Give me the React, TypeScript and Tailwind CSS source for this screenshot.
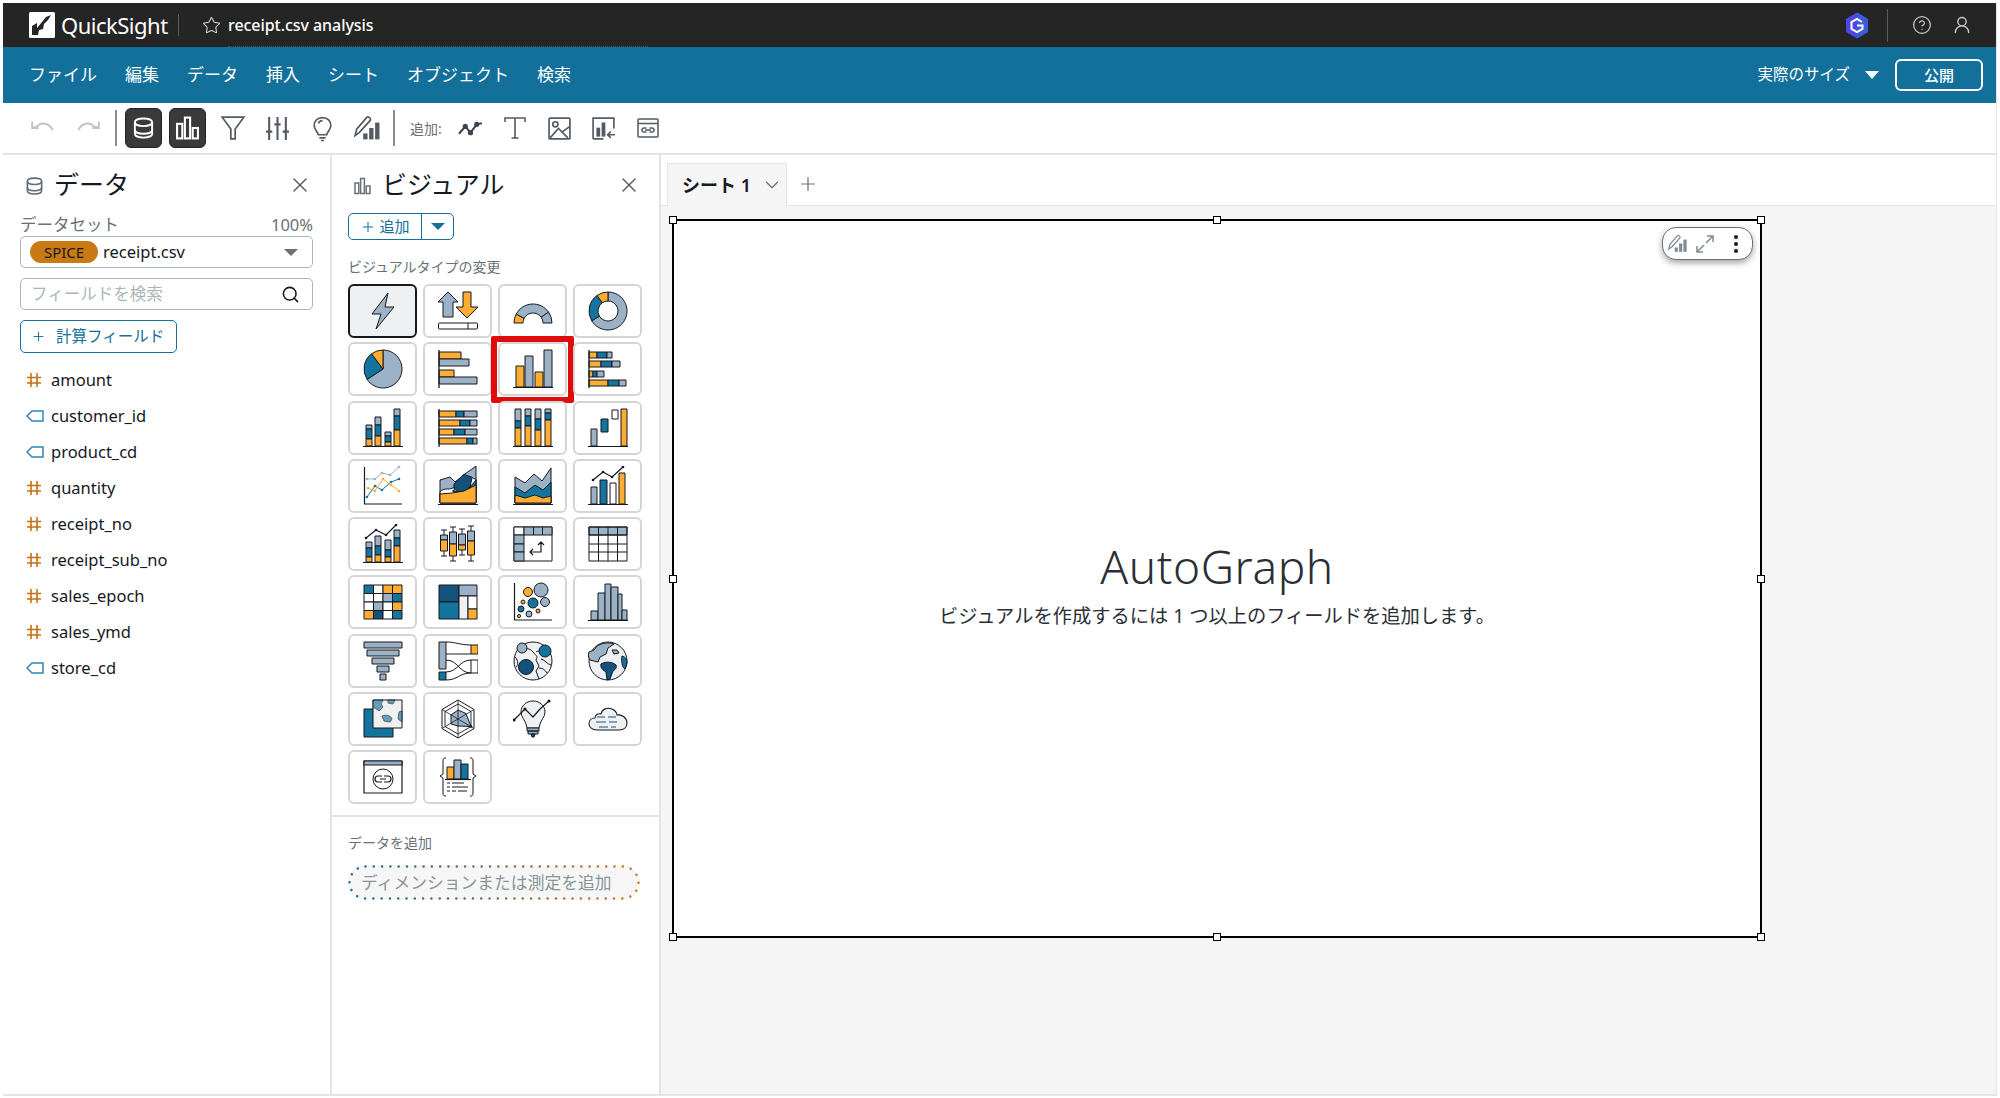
import React from 'react';
import { X, Search, Plus, ChevronDown, Star, CircleHelp, UserRound } from 'lucide-react';

const O = '#ffac33';
const G = '#9bb1c5';
const B = '#14749d';
const N = '#13527a';
const K = '#16191f';
const W = '#ffffff';
const L = '#eef0f2';

type Box = [number, number, number, number, string];

const Rects = ({ items }: { items: Box[] }) => (
  <>
    {items.map(([x, y, w, h, f], i) => (
      <rect key={i} x={x} y={y} width={w} height={h} fill={f} />
    ))}
  </>
);

// ring or pie slice, angles in degrees clockwise from 12 o'clock
const slice = (cx: number, cy: number, r: number, ir: number, a0: number, a1: number) => {
  const p = (rad: number, a: number) => {
    const t = ((a - 90) * Math.PI) / 180;
    return `${(cx + rad * Math.cos(t)).toFixed(2)} ${(cy + rad * Math.sin(t)).toFixed(2)}`;
  };
  const big = a1 - a0 > 180 ? 1 : 0;
  if (ir === 0) return `M${cx} ${cy}L${p(r, a0)}A${r} ${r} 0 ${big} 1 ${p(r, a1)}Z`;
  return `M${p(ir, a0)}L${p(r, a0)}A${r} ${r} 0 ${big} 1 ${p(r, a1)}L${p(ir, a1)}A${ir} ${ir} 0 ${big} 0 ${p(ir, a0)}Z`;
};

const Ic = ({ children }: { children: React.ReactNode }) => (
  <svg viewBox="0 0 40 40" className="w-10 h-10" fill="none" stroke={K} strokeWidth="1" strokeLinejoin="round">
    {children}
  </svg>
);

const Dots = ({ pts, fill = K, r = 1.3 }: { pts: number[][]; fill?: string; r?: number }) => (
  <>
    {pts.map(([x, y], i) => (
      <circle key={i} cx={x} cy={y} r={r} fill={fill} stroke="none" />
    ))}
  </>
);

const Line = ({ pts, color = K, width = 1 }: { pts: number[][]; color?: string; width?: number }) => (
  <polyline points={pts.map((p) => p.join(',')).join(' ')} stroke={color} strokeWidth={width} fill="none" />
);

const Base = () => <path d="M0 38.5H40" strokeWidth="1.2" />;

const stack = (x: number, w: number, a: number, b: number, c: number): Box[] => [
  [x, a, w, b - a, G],
  [x, b, w, c - b, B],
  [x, c, w, 38 - c, O],
];

const hstack = (y: number, h: number, a: number, b: number, c: number): Box[] => [
  [1, y, a, h, O],
  [1 + a, y, b, h, B],
  [1 + a + b, y, c, h, G],
];

const visualIcons: React.ReactNode[] = [
  <Ic key="bolt">
    <path d="M25 2 9 23h9l-5 15 18-22h-9l3-14Z" fill={G} />
  </Ic>,
  <Ic key="updown">
    <path d="M10 1 0 11h5v15h10V11h5L10 1Z" fill={G} />
    <path d="M25 1h8v15h7L29 27 18 16h7V1Z" fill={O} />
    <rect x="0.500" y="32" width="39" height="6" rx="1" fill={W} />
    <path d="M30 32v6" />
  </Ic>,
  <Ic key="gauge">
    <path d={slice(20, 32, 19, 10, -90, -62)} fill={O} />
    <path d={slice(20, 32, 19, 10, -62, 55)} fill={G} />
    <path d={slice(20, 32, 19, 10, 55, 90)} fill={G} />
  </Ic>,
  <Ic key="donut">
    <path d={slice(20, 20, 19, 10, 0, 239)} fill={G} />
    <path d={slice(20, 20, 19, 10, 239, 325)} fill={B} />
    <path d={slice(20, 20, 19, 10, 325, 360)} fill={O} />
  </Ic>,
  <Ic key="pie">
    <path d={slice(20, 20, 19, 0, 0, 237)} fill={G} />
    <path d={slice(20, 20, 19, 0, 237, 323)} fill={B} />
    <path d={slice(20, 20, 19, 0, 323, 360)} fill={O} />
  </Ic>,
  <Ic key="hbar">
    <Rects items={[[1, 3, 22, 7, O], [1, 10, 30, 7, G], [1, 21, 15, 7, O], [1, 28, 38, 7, G]]} />
    <path d="M1 1v38" strokeWidth="1.3" />
  </Ic>,
  <Ic key="vbar">
    <Rects items={[[3, 17, 8, 21, O], [12, 7, 8, 31, G], [22, 23, 8, 15, O], [31, 1, 8, 37, G]]} />
    <Base />
  </Ic>,
  <Ic key="hstack">
    <Rects
      items={[
        ...hstack(3, 6, 8, 10, 5),
        ...hstack(12, 6, 12, 11, 8),
        ...hstack(22, 6, 4, 4, 7),
        ...hstack(31, 6, 19, 11, 7),
      ]}
    />
    <path d="M1 1v38" strokeWidth="1.3" />
  </Ic>,
  <Ic key="vstack">
    <Rects items={[...stack(3, 6, 17, 21, 31), ...stack(12, 6, 9, 17, 28), ...stack(22, 6, 24, 28, 34), ...stack(31, 6, 1, 8, 22)]} />
    <Base />
  </Ic>,
  <Ic key="hstack-full">
    <Rects
      items={[
        [1, 3, 17, 6, O], [18, 3, 8, 6, B], [26, 3, 13, 6, G],
        [1, 12, 21, 6, O], [22, 12, 10, 6, B], [32, 12, 7, 6, G],
        [1, 21, 15, 6, O], [16, 21, 11, 6, B], [27, 21, 12, 6, G],
        [1, 30, 28, 6, O], [29, 30, 6, 6, B], [35, 30, 4, 6, G],
      ]}
    />
    <path d="M1 1v38" strokeWidth="1.3" />
  </Ic>,
  <Ic key="vstack-full">
    <Rects items={[...stack(2, 6, 1, 13, 20), ...stack(12, 6, 1, 8, 18), ...stack(22, 6, 1, 11, 22), ...stack(32, 6, 1, 5, 12)]} />
    <Base />
  </Ic>,
  <Ic key="waterfall">
    <Rects items={[[3, 21, 6, 17, G], [13, 11, 7, 13, B], [24, 2, 6, 9, W], [33, 1, 6, 37, O]]} />
    <Base />
  </Ic>,
  <Ic key="line">
    <path d="M1.5 1v37H39" strokeWidth="1.2" />
    <Line color={G} pts={[[4, 13], [12, 13], [19, 7], [27, 9], [36, 1]]} />
    <Line color={B} pts={[[4, 31], [12, 20], [19, 24], [28, 16], [36, 13]]} />
    <Line color={O} pts={[[5, 22], [12, 25], [20, 13], [28, 19], [36, 25]]} />
    <Dots fill={G} pts={[[4, 13], [12, 13], [19, 7], [27, 9], [36, 1]]} />
    <Dots fill={B} pts={[[4, 31], [12, 20], [19, 24], [28, 16], [36, 13]]} />
    <Dots fill={O} pts={[[5, 22], [12, 25], [20, 13], [28, 19], [36, 25]]} />
  </Ic>,
  <Ic key="area">
    <path d="M2 37V14l10-3 5 5 10-8 11-8v37H2Z" fill={G} />
    <path d="M2 37V26c5-6 10 0 15-6s6-10 12-10 5 3 9 3v24H2Z" fill={W} />
    <path d="M16 18 26 8l8 4-2 9-8 6-8-4v-5Z" fill={N} />
    <path d="M15 24c6 4 12 2 17-3l6-7v11l-23 1V24Z" fill={B} />
    <path d="M2 37V28l12-1 12-2 12-6v18H2Z" fill={O} />
    <Base />
  </Ic>,
  <Ic key="area-stack">
    <path d="M2 37V11l10 6 9-9 8 7 9-13v35H2Z" fill={G} />
    <path d="M2 37V21l10 6 10-8 8 5 8-8v21H2Z" fill={B} />
    <path d="M2 37v-8l10 3 10-3 8 3 8-2v7H2Z" fill={O} />
    <Base />
  </Ic>,
  <Ic key="combo">
    <Rects items={[[3, 21, 6, 17, G], [12, 14, 7, 24, B], [22, 17, 6, 21, W], [31, 7, 6, 31, O]]} />
    <Line pts={[[5, 14], [15, 6], [24, 11], [35, 1]]} width={1.2} />
    <Dots pts={[[5, 14], [15, 6], [24, 11], [35, 1]]} />
    <Base />
  </Ic>,
  <Ic key="combo-stack">
    <Rects items={[...stack(3, 6, 18, 24, 33), ...stack(12, 6, 12, 22, 31), ...stack(22, 6, 16, 26, 33), ...stack(31, 6, 6, 14, 22)]} />
    <Line pts={[[3, 14], [13, 6], [23, 11], [33, 1]]} width={1.2} />
    <Dots pts={[[3, 14], [13, 6], [23, 11], [33, 1]]} />
    <Base />
  </Ic>,
  <Ic key="box">
    <path d="M6 6v26M3 6h6M3 32h6M15 3v34M12 3h6M12 37h6M24 5v26M21 5h6M21 31h6M33 2v35M30 2h6M30 37h6" />
    <Rects
      items={[
        [2.5, 11, 7, 5, G], [2.5, 16, 7, 11, O],
        [11.5, 8, 7, 12, G], [11.5, 20, 7, 12, O],
        [20.5, 10, 7, 11, G], [20.5, 21, 7, 5, O],
        [29.5, 7, 7, 10, G], [29.5, 17, 7, 14, O],
      ]}
    />
  </Ic>,
  <Ic key="pivot">
    <Rects
      items={[
        [1, 3, 38, 34, W], [1, 3, 10, 8, W], [11, 3, 9.5, 8, G], [20.5, 3, 9, 8, G], [29.5, 3, 9.5, 8, G],
        [1, 11, 10, 9, G], [1, 20, 10, 8, G], [1, 28, 10, 9, G],
      ]}
    />
    <path d="M17 28h11v-10M25 21l3-3 3 3M20 25l-3 3 3 3" strokeWidth="1.2" />
  </Ic>,
  <Ic key="table">
    <Rects items={[[1, 3, 38, 8, G]]} />
    <rect x="1" y="3" width="38" height="34" />
    <path d="M1 11h38M1 20h38M1 28h38M10.5 3v34M20 3v34M29.5 3v34" />
  </Ic>,
  <Ic key="heat">
    <Rects
      items={[
        [1, 3, 9.5, 8.5, B], [10.5, 3, 9.5, 8.5, W], [20, 3, 9.5, 8.5, O], [29.5, 3, 9.5, 8.5, O],
        [1, 11.5, 9.5, 8.5, W], [10.5, 11.5, 9.5, 8.5, W], [20, 11.5, 9.5, 8.5, G], [29.5, 11.5, 9.5, 8.5, B],
        [1, 20, 9.5, 8.5, W], [10.5, 20, 9.5, 8.5, G], [20, 20, 9.5, 8.5, W], [29.5, 20, 9.5, 8.5, O],
        [1, 28.5, 9.5, 8.5, O], [10.5, 28.5, 9.5, 8.5, N], [20, 28.5, 9.5, 8.5, W], [29.5, 28.5, 9.5, 8.5, B],
      ]}
    />
  </Ic>,
  <Ic key="tree">
    <Rects
      items={[
        [1, 3, 20, 17, N], [1, 20, 20, 17, B], [21, 3, 18, 11, G], [21, 14, 9, 23, L],
        [30, 14, 9, 13, W], [30, 27, 9, 10, O],
      ]}
    />
  </Ic>,
  <Ic key="scatter">
    <path d="M1.5 1v37H39" strokeWidth="1.2" />
    <circle cx="15" cy="10" r="4.5" fill={O} />
    <circle cx="28" cy="8" r="7" fill={G} />
    <circle cx="10" cy="20" r="2" fill={O} />
    <circle cx="20" cy="21" r="5" fill={B} />
    <circle cx="32" cy="20" r="4.5" fill={G} />
    <circle cx="8" cy="27" r="3" fill={B} />
    <circle cx="16" cy="32" r="3" fill={G} />
    <circle cx="25" cy="29" r="2" fill={O} />
    <circle cx="6" cy="34" r="1.6" fill={O} />
  </Ic>,
  <Ic key="hist">
    <Rects items={[[3, 29, 7, 9, G], [10, 11, 7, 27, G], [17, 2, 6, 36, G], [23, 5, 7, 33, G], [30, 12, 4, 26, G], [34, 28, 5, 10, G]]} />
    <Base />
  </Ic>,
  <Ic key="funnel">
    <Rects items={[[1, 1, 38, 6, G], [4, 9, 32, 6, G], [9, 17, 22, 6, G], [14, 25, 12, 6, G], [17, 33, 6, 6, G]]} />
  </Ic>,
  <Ic key="sankey">
    <rect x="1" y="1" width="7" height="27" fill={G} />
    <rect x="1" y="31" width="7" height="8" fill={B} />
    <rect x="33" y="4" width="7" height="9" fill={O} />
    <rect x="33" y="19" width="7" height="13" fill={W} />
    <path d="M8 1c10 0 14 3 25 3M8 13c10 0 14 0 25 0M8 19c12 0 13 13 25 13M8 31c12 0 13-12 25-12M8 39c12 0 13-7 25-7" />
  </Ic>,
  <Ic key="globe-points">
    <circle cx="20" cy="20" r="19" fill={L} />
    <path d="M9 5c4 4 7 1 11 6s5 3 3 8l3 6-3 5 3 8M33 8c-5 2-9 2-10 3M2 16c4 4 3 9 1 10M28 18c4 1 6 5 10 6M26 27c4 0 6 2 8 5" />
    <circle cx="9" cy="7" r="5" fill={G} />
    <circle cx="32" cy="10" r="6" fill={B} />
    <circle cx="13" cy="26" r="7.5" fill={N} />
  </Ic>,
  <Ic key="globe">
    <circle cx="20" cy="20" r="19" fill={L} />
    <path d="M9 5c5-3 12-4 17-2l-6 4-2 6-6 3-2 5-8-2c-2-3-2-5-1-8l5-2 3-4Z" fill={G} />
    <path d="M13 23c5-3 12-2 15 1 1 2 0 4-3 6l-3 8-3 1-1-8c-3-2-6-4-5-8Z" fill={N} />
    <path d="M34 15c4 1 5 4 5 7l-2 6c-3-1-4-9-3-13Z" fill={B} />
    <path d="M24 9h5l2 3-5 1-2-4Z" fill={G} />
  </Ic>,
  <Ic key="map">
    <rect x="1" y="10" width="29" height="28" fill={B} />
    <rect x="10" y="1" width="29" height="28" fill={L} />
    <path d="M10 1h10l-2 4 2 3-4 4-4-3h-2V1ZM25 1h7l-2 4-5-1V1ZM39 12l-3 1-1 7 4 3V12ZM19 17c5-2 9 0 10 3l-2 3-6-1-2-5Z" fill={B} opacity="0.65" />
  </Ic>,
  <Ic key="radar">
    <path d="M20 1 36 10.5v19L20 39 4 29.5v-19L20 1Z" />
    <path d="M20 5 33 12.5v15L20 35 7 27.5v-15L20 5Z" strokeWidth="0.9" />
    <path d="M20 11 28 14.5l5 13L20 27l-7-2v-9l7-5Z" fill={G} />
    <path d="M20 1v38M4 10.5l32 19M36 10.5l-32 19" strokeWidth="0.8" />
    <Dots pts={[[33, 27.5]]} />
  </Ic>,
  <Ic key="insight">
    <path d="M20 2c-7 0-12 5-12 11 0 5 4 8 5 12 0 1 1 3 1 4h12c0-1 1-3 1-4 1-4 5-7 5-12 0-6-5-11-12-11Z" fill={L} />
    <path d="M14 29h12v3H14zM15 32h10v3H15z" fill={G} />
    <path d="M18 35h4l-1 3h-2l-1-3Z" fill={N} />
    <Line pts={[[1, 21], [12, 10], [20, 18], [27, 10], [36, 2]]} width={1.2} />
    <Dots r={1.6} pts={[[1, 21], [12, 10], [36, 2]]} />
  </Ic>,
  <Ic key="cloud">
    <path d="M9 31c-5 0-8-3-8-6 0-4 3-6 6-6 0-3 3-5 6-4 1-5 6-7 11-5 3 1 5 4 5 6 5-1 10 3 10 8 0 4-3 7-8 7H9Z" fill={L} strokeWidth="1.1" />
    <path d="M9 18h8M20 18h8M8 23h10M21 23h8M11 28h9M23 28h5" stroke={N} strokeWidth="1.2" />
  </Ic>,
  <Ic key="embed">
    <rect x="1" y="4" width="38" height="32" fill={W} strokeWidth="1.2" />
    <rect x="1" y="4" width="38" height="4" fill={G} strokeWidth="1.2" />
    <circle cx="20" cy="22" r="10" fill={W} />
    <path d="M19 19h-4a3 3 0 0 0 0 6h4M21 19h4a3 3 0 0 1 0 6h-4M17 22h6" strokeWidth="1.2" />
  </Ic>,
  <Ic key="custom">
    <path d="M8 1c-3 0-3 1-3 4v12l-3 2 3 2v14c0 3 0 4 3 4M32 1c3 0 3 1 3 4v12l3 2-3 2v14c0 3 0 4-3 4" strokeWidth="1" />
    <Rects items={[[9, 10, 7, 12, O], [16, 3, 7, 19, G], [23, 7, 7, 15, B]]} />
    <path d="M7 22.5h26" strokeWidth="1.2" />
    <path d="M9 26h3M14 26h12M9 30h3M14 30h16M9 34h3M14 34h4M20 34h9" strokeWidth="1" />
  </Ic>,
];

const fields = [
  { name: 'amount', num: true },
  { name: 'customer_id', num: false },
  { name: 'product_cd', num: false },
  { name: 'quantity', num: true },
  { name: 'receipt_no', num: true },
  { name: 'receipt_sub_no', num: true },
  { name: 'sales_epoch', num: true },
  { name: 'sales_ymd', num: true },
  { name: 'store_cd', num: false },
];

const DbIcon = ({ className = '', color = 'currentColor' }: { className?: string; color?: string }) => (
  <svg viewBox="0 0 24 24" className={className} fill="none" stroke={color} strokeWidth="2">
    <path d="M3 6c0-2 3-4 9-4s9 2 9 4v12c0 2-3 4-9 4s-9-2-9-4V6Z" />
    <path d="M3 6c0 2 3 4 9 4s9-2 9-4M3 14c0 2 3 4 9 4s9-2 9-4" />
  </svg>
);

const BarsIcon = ({ className = '', color = 'currentColor' }: { className?: string; color?: string }) => (
  <svg viewBox="0 0 24 24" className={className} fill="none" stroke={color} strokeWidth="2">
    <rect x="2" y="8" width="5" height="14" />
    <rect x="9.5" y="2" width="5" height="20" />
    <rect x="17" y="12" width="5" height="10" />
  </svg>
);

const PencilChart = ({ className = '', color = '#5f6b7a' }: { className?: string; color?: string }) => (
  <svg viewBox="0 0 24 24" className={className} fill="none" stroke={color} strokeWidth="1.6">
    <path d="M1 19 2.500 13 12 2c1-1 4 1 3 3L5 16l-4 3Z" />
    <rect x="8.500" y="17" width="4" height="5.500" fill={color} stroke="none" />
    <rect x="14" y="12" width="4" height="10.500" fill={color} stroke="none" />
    <rect x="19.500" y="7" width="4" height="15.500" fill={color} stroke="none" />
  </svg>
);

const ToolIcon = ({ children }: { children: React.ReactNode }) => (
  <div className="w-[44.5px] h-10 flex items-center justify-center shrink-0">{children}</div>
);

const toolStroke = { fill: 'none', stroke: '#545b64', strokeWidth: 1.6 };

const TopBar = () => (
  <div className="h-11 bg-[#252525] flex items-center text-white pl-[26px] pr-[24px] shrink-0">
    <svg viewBox="0 0 26 26" className="w-[26px] h-[26px] shrink-0">
      <rect width="26" height="26" rx="1.5" fill="#fff" />
      <path d="M3 23V14l5-3v5l5-6 4-5 5-2-3 5-4 4-1 5-4 1-1 5H3Z" fill="#252525" />
    </svg>
    <span className="ml-[6px] text-[22px] tracking-[-0.5px] leading-none w-[113px]">QuickSight</span>
    <div className="w-px h-[22px] bg-[#5a5a5a] ml-[4px]" />
    <Star size={19} strokeWidth={1.3} className="ml-[23px] text-[#d5dbdb]" />
    <div className="ml-[7px] w-[420px] h-full flex items-center border-b border-dotted border-[#4b4b4b]">
      <span className="text-[16px] font-medium tracking-[-0.05px]">receipt.csv analysis</span>
    </div>
    <div className="flex-1" />
    <svg viewBox="0 0 24 26" className="w-[24px] h-[27px] shrink-0">
      <path d="M12 0 23 6.5v13L12 26 1 19.5v-13L12 0Z" fill="#4f46e5" />
      <path d="M12 0 23 6.5v13L12 26V0Z" fill="#3b5bdb" />
      <path d="M17 9.5 12 6.5 6.5 9.7v6.6L12 19.5l5.5-3.2V13H12" fill="none" stroke="#fff" strokeWidth="2" />
    </svg>
    <div className="w-px h-[33px] bg-[#5a5a5a] ml-[18px]" />
    <CircleHelp size={20} strokeWidth={1.5} className="ml-[24px] text-[#c8c8c8]" />
    <UserRound size={20} strokeWidth={1.7} className="ml-[20px] text-[#c8c8c8]" />
  </div>
);

const MenuBar = () => (
  <div className="h-14 bg-[#12709a] flex items-center text-white pl-[26px] pr-[13px] shrink-0">
    <div className="flex items-center gap-[28px] text-[17px]">
      {['ファイル', '編集', 'データ', '挿入', 'シート', 'オブジェクト', '検索'].map((m) => (
        <span key={m} className="whitespace-nowrap">{m}</span>
      ))}
    </div>
    <div className="flex-1" />
    <span className="text-[15.500px] whitespace-nowrap">実際のサイズ</span>
    <div className="ml-[15px] w-0 h-0 border-l-[7px] border-r-[7px] border-t-[8px] border-l-transparent border-r-transparent border-t-white" />
    <div className="ml-4 w-[88px] h-[32px] border-2 border-white rounded-md flex items-center justify-center text-[15px] font-medium">
      公開
    </div>
  </div>
);

const ToolBar = () => (
  <div className="h-[52px] bg-white border-b-2 border-[#e4e4e4] flex items-center pl-[18px] shrink-0">
    <ToolIcon>
      <svg viewBox="0 0 24 24" className="w-[26px] h-[26px]" fill="none" stroke="#c4c4c4" strokeWidth="1.8">
        <path d="M3 11h3c4-5 12-4 15 3" />
        <path d="M2 6v6h6" />
      </svg>
    </ToolIcon>
    <ToolIcon>
      <svg viewBox="0 0 24 24" className="w-[26px] h-[26px]" fill="none" stroke="#c4c4c4" strokeWidth="1.8">
        <path d="M21 11h-3C14 6 6 7 3 14" />
        <path d="M22 6v6h-6" />
      </svg>
    </ToolIcon>
    <div className="w-[2px] h-[36px] bg-[#8d8d8d] ml-[5px] mr-[8px]" />
    <div className="w-[37px] h-[40px] rounded-md bg-[#3a3a3a] border border-[#222] flex items-center justify-center">
      <DbIcon className="w-[23px] h-[26px]" color="#fff" />
    </div>
    <div className="ml-[7px] w-[37px] h-[40px] rounded-md bg-[#3a3a3a] border border-[#222] flex items-center justify-center">
      <BarsIcon className="w-[25px] h-[26px]" color="#fff" />
    </div>
    <div className="ml-[5px] flex items-center">
      <ToolIcon>
        <svg viewBox="0 0 24 24" className="w-[26px] h-[28px]" {...toolStroke}>
          <path d="M2 2h20l-8 11v9h-4v-9L2 2Z" />
        </svg>
      </ToolIcon>
      <ToolIcon>
        <svg viewBox="0 0 24 24" className="w-[25px] h-[25px]" {...toolStroke} strokeWidth={2}>
          <path d="M4 1v22M12 1v22M20 1v22M1 15h6M9 8h6M17 15h6" />
        </svg>
      </ToolIcon>
      <ToolIcon>
        <svg viewBox="0 0 24 24" className="w-[25px] h-[27px]" {...toolStroke}>
          <path d="M12 1.5c-5 0-8 3.5-8 7.5 0 3.5 3 5.5 4 9h8c1-3.5 4-5.5 4-9 0-4-3-7.5-8-7.5Z" />
          <path d="M9 21h6M10.5 23.5h3M8 7c1-2 2-2.500 4-2.500" />
        </svg>
      </ToolIcon>
      <ToolIcon>
        <PencilChart className="w-[26px] h-[26px]" color="#545b64" />
      </ToolIcon>
    </div>
    <div className="w-[2px] h-[36px] bg-[#8d8d8d] ml-[4px]" />
    <span className="ml-[15px] w-[36px] text-[14px] text-[#6f6f6f] whitespace-nowrap">追加:</span>
    <div className="flex items-center ml-[2px]">
      <ToolIcon>
        <svg viewBox="0 0 24 24" className="w-[25px] h-[25px]" fill="none" stroke="#3f4650" strokeWidth="2">
          <path d="m1 17 6-7 5 6 6-8 5-1" />
          <circle cx="7" cy="10" r="1.500" fill="#3f4650" />
          <circle cx="12" cy="16" r="1.500" fill="#3f4650" />
          <circle cx="18" cy="8" r="1.500" fill="#3f4650" />
        </svg>
      </ToolIcon>
      <ToolIcon>
        <svg viewBox="0 0 24 24" className="w-[24px] h-[24px]" fill="none" stroke="#545b64" strokeWidth="1.600">
          <path d="M2 6V2h20v4M2 2h20M12 2v20M8.500 22h7" />
        </svg>
      </ToolIcon>
      <ToolIcon>
        <svg viewBox="0 0 24 24" className="w-[25px] h-[25px]" fill="none" stroke="#545b64" strokeWidth="1.600">
          <rect x="2" y="2" width="20" height="20" rx="1" />
          <circle cx="8" cy="8" r="2.500" />
          <path d="m3 21 8-9 9 9M15 15l7-5" />
        </svg>
      </ToolIcon>
      <ToolIcon>
        <svg viewBox="0 0 24 24" className="w-[25px] h-[25px]" fill="none" stroke="#545b64" strokeWidth="1.600">
          <path d="M2 22V2h20v10M2 22h10" />
          <rect x="6" y="12" width="2" height="7" fill="#545b64" />
          <rect x="11" y="7" width="2" height="12" fill="#545b64" />
          <path d="M23 18h-7M19 15l-3 3 3 3" />
        </svg>
      </ToolIcon>
      <ToolIcon>
        <svg viewBox="0 0 24 24" className="w-[24px] h-[24px]" fill="none" stroke="#545b64" strokeWidth="1.500">
          <rect x="2" y="3" width="20" height="18" rx="1" />
          <path d="M2 7.500h20M10.500 12H8a2 2 0 0 0 0 4h2.500M13.500 12H16a2 2 0 0 1 0 4h-2.500M9 14h6" />
        </svg>
      </ToolIcon>
    </div>
  </div>
);

const DataPanel = () => (
  <div className="w-[329px] shrink-0 bg-white border-r-2 border-[#e4e4e4] pl-[17px] pr-[17px] flex flex-col">
    <div className="flex items-center h-[59px] pl-[5px] pr-[1px]">
      <DbIcon className="w-[19px] h-[20px] mt-[2px]" color="#5f6b7a" />
      <span className="ml-[10px] text-[25px] leading-none text-[#16191f]">データ</span>
      <X size={24} strokeWidth={1.4} className="ml-auto text-[#545b64]" />
    </div>
    <div className="mt-[1px] flex items-center justify-between text-[16.500px] leading-[19px] text-[#687078]">
      <span>データセット</span>
      <span>100%</span>
    </div>
    <div className="mt-[2px] h-[32px] border border-[#aab7b8] rounded-[5px] flex items-center pl-[9px] pr-[14px]">
      <span className="w-[68px] h-[22px] rounded-full bg-[#c97a15] text-[#16191f] text-[15px] flex items-center justify-center">SPICE</span>
      <span className="ml-[5px] text-[16.500px] text-[#16191f]">receipt.csv</span>
      <div className="ml-auto w-0 h-0 border-l-[7px] border-r-[7px] border-t-[7px] border-l-transparent border-r-transparent border-t-[#687078]" />
    </div>
    <div className="mt-[10px] h-[32px] border border-[#aab7b8] rounded-[5px] flex items-center pl-[10px] pr-[12px]">
      <span className="text-[16.500px] text-[#aab7b8]">フィールドを検索</span>
      <Search size={19} strokeWidth={2} className="ml-auto text-[#16191f]" />
    </div>
    <div className="mt-[10px] w-[157px] h-[33px] border border-[#12709a] rounded-[5px] flex items-center pl-[10px] text-[#12709a]">
      <Plus size={15} strokeWidth={1.500} />
      <span className="ml-[10px] text-[15.500px] whitespace-nowrap">計算フィールド</span>
    </div>
    <div className="mt-[9px] flex flex-col">
      {fields.map((f) => (
        <div key={f.name} className="h-[36px] flex items-center pl-[6px]">
          {f.num ? (
            <svg viewBox="0 0 16 16" className="w-[16px] h-[16px] shrink-0" fill="none" stroke="#c7700f" strokeWidth="1.600">
              <path d="M5 1v14M11 1v14M1 5.500h14M1 11h14" />
            </svg>
          ) : (
            <svg viewBox="0 0 18 14" className="w-[18px] h-[14px] shrink-0" fill="none" stroke="#2b87b8" strokeWidth="1.500">
              <path d="M1 7 6 2h11v10H6L1 7Z" />
            </svg>
          )}
          <span className={`${f.num ? 'ml-[9px]' : 'ml-[7px]'} text-[16.500px] text-[#16191f]`}>{f.name}</span>
        </div>
      ))}
    </div>
  </div>
);

const VisualPanel = () => (
  <div className="w-[329px] shrink-0 bg-white border-r-2 border-[#e4e4e4] flex flex-col">
    <div className="px-[16px]">
      <div className="flex items-center h-[59px] pl-[5px] pr-[2px]">
        <BarsIcon className="w-[19px] h-[18px] mt-[3px]" color="#687078" />
        <span className="ml-[10px] text-[25px] leading-none text-[#16191f]">ビジュアル</span>
        <X size={24} strokeWidth={1.4} className="ml-auto text-[#545b64]" />
      </div>
      <div className="mt-[-1px] flex items-stretch w-[106px] h-[27px] border border-[#12709a] rounded-[5px] text-[#12709a]">
        <div className="flex-1 flex items-center justify-center gap-[3px] text-[15px]">
          <Plus size={16} strokeWidth={1.500} />
          <span>追加</span>
        </div>
        <div className="w-[32px] border-l border-[#12709a] flex items-center justify-center">
          <div className="w-0 h-0 border-l-[7px] border-r-[7px] border-t-[7px] border-l-transparent border-r-transparent border-t-[#12709a]" />
        </div>
      </div>
      <div className="mt-[18px] text-[14px] leading-[18px] text-[#687078]">ビジュアルタイプの変更</div>
      <div className="mt-[8px] grid grid-cols-[repeat(4,69px)] auto-rows-[54px] gap-x-[6px] gap-y-[4.300px]">
        {visualIcons.map((icon, i) => (
          <div
            key={i}
            className={`relative rounded-[6px] border-2 flex items-center justify-center ${
              i === 0 ? 'bg-[#eef0f2] border-[#16191f]' : 'bg-white border-[#d5d5d5]'
            }`}
          >
            {icon}
            {i === 6 && <div className="absolute -inset-[9px] top-[-8px] border-[6px] border-[#e00b0b] rounded-[2px]" />}
          </div>
        ))}
      </div>
    </div>
    <div className="mt-[11px] border-t-2 border-[#e4e4e4] px-[16px]">
      <div className="mt-[17px] text-[14px] leading-[18px] text-[#687078]">データを追加</div>
      <div className="relative mt-[13px] w-[292px] h-[35px] bg-[#f6f6f6] rounded-full flex items-center pl-[13px]">
        <span className="text-[16.800px] text-[#879596] whitespace-nowrap">ディメンションまたは測定を追加</span>
        <svg viewBox="0 0 292 35" className="absolute inset-0 w-full h-full">
          <defs>
            <linearGradient id="dropEdge" x1="0" y1="0" x2="1" y2="0">
              <stop offset="0" stopColor="#12709a" />
              <stop offset="1" stopColor="#d9730d" />
            </linearGradient>
          </defs>
          <rect x="1.500" y="1.500" width="289" height="32" rx="16" fill="none" stroke="url(#dropEdge)" strokeWidth="2.500" strokeLinecap="round" strokeDasharray="0 8.300" />
        </svg>
      </div>
    </div>
  </div>
);

const Handle = ({ className }: { className: string }) => (
  <div className={`absolute w-[8px] h-[8px] bg-white border-[1.500px] border-black ${className}`} />
);

const Canvas = () => (
  <div className="flex-1 min-w-0 flex flex-col bg-[#f5f5f5]">
    <div className="h-[51px] bg-white border-b border-[#e4e4e4] pt-[8px] pl-[6px] flex items-end shrink-0">
      <div className="w-[120px] h-[43px] -mb-px bg-[#f5f5f5] border border-b-0 border-[#e4e4e4] flex items-center pl-[14px] pr-[3px]">
        <span className="text-[18px] font-semibold text-[#16191f] whitespace-nowrap">シート 1</span>
        <ChevronDown size={22} strokeWidth={1.300} className="ml-auto text-[#687078]" />
      </div>
      <div className="h-[43px] flex items-center ml-[10px]">
        <Plus size={22} strokeWidth={1.300} className="text-[#687078]" />
      </div>
    </div>
    <div className="pl-[11px] pt-[13px]">
      <div className="relative w-[1090px] h-[719px] bg-white border-2 border-black flex flex-col items-center justify-center pt-[17px]">
        <Handle className="-left-[5px] -top-[5px]" />
        <Handle className="left-[calc(50%-4px)] -top-[5px]" />
        <Handle className="-right-[5px] -top-[5px]" />
        <Handle className="-left-[5px] top-[calc(50%-4px)]" />
        <Handle className="-right-[5px] top-[calc(50%-4px)]" />
        <Handle className="-left-[5px] -bottom-[5px]" />
        <Handle className="left-[calc(50%-4px)] -bottom-[5px]" />
        <Handle className="-right-[5px] -bottom-[5px]" />
        <div className="absolute top-[6px] right-[7px] w-[91px] h-[33px] bg-white rounded-[14px] border border-[#687078] shadow-[0_3px_6px_rgba(0,0,0,0.35)] flex items-center pl-[5px]">
          <PencilChart className="w-[19px] h-[19px]" color="#7f8a93" />
          <svg viewBox="0 0 20 20" className="ml-[8px] w-[20px] h-[20px]" fill="none" stroke="#7f8a93" strokeWidth="1.500">
            <path d="M12 2h6v6M18 2l-7 7M8 18H2v-6M2 18l7-7" />
          </svg>
          <svg viewBox="0 0 6 20" className="ml-[18px] w-[6px] h-[20px]" fill="#16191f">
            <circle cx="3" cy="3" r="2" />
            <circle cx="3" cy="10" r="2" />
            <circle cx="3" cy="17" r="2" />
          </svg>
        </div>
        <div className="text-[46px] font-light leading-[56px] text-[#2a2f36] tracking-[0.6px] mt-[-6px]">AutoGraph</div>
        <div className="text-[19.250px] leading-[28px] text-[#2a2f36] mt-[8px] whitespace-nowrap">
          ビジュアルを作成するには 1 つ以上のフィールドを追加します。
        </div>
      </div>
    </div>
  </div>
);

export default function App() {
  return (
    <div className="w-[2000px] h-[1098px] bg-white pt-[3px] pl-[3px] pr-[3px] pb-[2px] overflow-hidden font-['Noto_Sans','Noto_Sans_CJK_JP',sans-serif]">
      <div className="h-full flex flex-col border-b-2 border-r border-[#e4e4e4]">
        <TopBar />
        <MenuBar />
        <ToolBar />
        <div className="flex-1 min-h-0 flex">
          <DataPanel />
          <VisualPanel />
          <Canvas />
        </div>
      </div>
    </div>
  );
}
